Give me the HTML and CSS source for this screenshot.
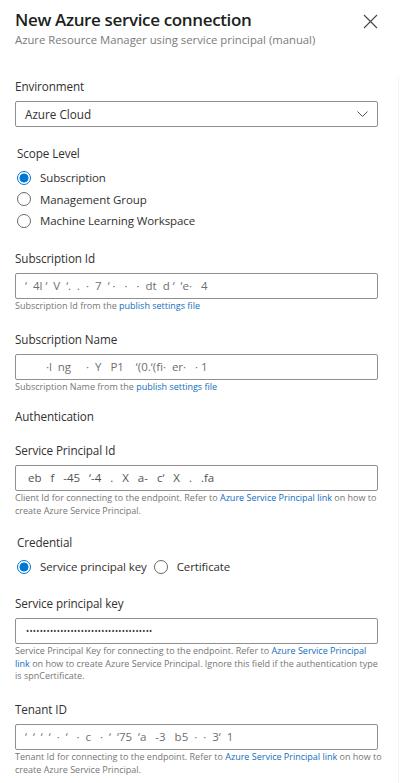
FILE: index.html
```html
<!DOCTYPE html>
<html lang="en">
<head>
<meta charset="utf-8">
<title>New Azure service connection</title>
<link rel="stylesheet" href="styles.css">
</head>
<body>
<div class="panel">
  <header class="header">
    <div class="titles">
      <h1 class="title">New Azure service connection</h1>
      <div class="subtitle">Azure Resource Manager using service principal (manual)</div>
    </div>
    <button class="close" aria-label="Close">
      <svg width="15" height="15" viewBox="0 0 15 15"><path d="M1 1L14 14M14 1L1 14" stroke="#444" stroke-width="1.1" fill="none"/></svg>
    </button>
  </header>

  <main class="content">
    <div class="field field-first">
      <div class="label">Environment</div>
      <div class="box select">
        <span>Azure Cloud</span>
        <svg width="11" height="6" viewBox="0 0 11 6"><path d="M0.5 0.5L5.5 5.5L10.5 0.5" stroke="#555" stroke-width="1" fill="none"/></svg>
      </div>
    </div>

    <div class="group scope">
      <div class="label indent">Scope Level</div>
      <div class="radios">
        <div class="radio-row"><span class="radio on"></span><span>Subscription</span></div>
        <div class="radio-row"><span class="radio"></span><span>Management Group</span></div>
        <div class="radio-row"><span class="radio"></span><span>Machine Learning Workspace</span></div>
      </div>
    </div>

    <div class="field">
      <div class="label">Subscription Id</div>
      <div class="box"><span class="masked">‘  4l ʼ  V  ʼ.  .  ·  7  ʼ ·   ·   ·  dt  d ʼ  ʼe·   4</span></div>
      <div class="help">Subscription Id from the <a href="#">publish settings file</a></div>
    </div>

    <div class="field">
      <div class="label">Subscription Name</div>
      <div class="box"><span class="masked">       ·l  ng     ·  Y   P1    ʼ(0.ʼ(fi·  er·   · 1</span></div>
      <div class="help">Subscription Name from the <a href="#">publish settings file</a></div>
    </div>

    <div class="section-title">Authentication</div>

    <div class="field field-auth">
      <div class="label">Service Principal Id</div>
      <div class="box"><span class="masked sp">eb   f   -45   ʼ-4   .   X   a-   cʼ   X   .   .fa</span></div>
      <div class="help">Client Id for connecting to the endpoint. Refer to <a href="#">Azure Service Principal link</a> on how to create Azure Service Principal.</div>
    </div>

    <div class="group credential">
      <div class="label indent">Credential</div>
      <div class="radio-inline">
        <span class="radio on"></span><span class="rtext">Service principal key</span>
        <span class="radio second"></span><span class="rtext">Certificate</span>
      </div>
    </div>

    <div class="field">
      <div class="label">Service principal key</div>
      <div class="box"><span class="dots">•••••••••••••••••••••••••••••••••••••</span></div>
      <div class="help help-narrow">Service Principal Key for connecting to the endpoint. Refer to <a href="#">Azure Service Principal link</a> on how to create Azure Service Principal. Ignore this field if the authentication type is spnCertificate.</div>
    </div>

    <div class="field">
      <div class="label">Tenant ID</div>
      <div class="box"><span class="masked">ʼ  ʼ  ʼ  ʼ  ·  ʼ   ·  c   ·  ʼ  ʼ75  ʼa   -3   b5  ·  ·  3ʼ  1</span></div>
      <div class="help">Tenant Id for connecting to the endpoint. Refer to <a href="#">Azure Service Principal link</a> on how to create Azure Service Principal.</div>
    </div>
  </main>
</div>
</body>
</html>
```

FILE: styles.css
```css
* { box-sizing: border-box; }

html, body {
  margin: 0;
  padding: 0;
  background: #ffffff;
}

body {
  font-family: "Open Sans", "Noto Sans", sans-serif;
  color: #323130;
  width: 400px;
  height: 783px;
  overflow: hidden;
}

.panel {
  width: 400px;
}

.header {
  display: flex;
  justify-content: space-between;
  align-items: flex-start;
  padding: 7px 22px 0 15px;
  height: 62px;
}

.title {
  margin: 0;
  font-size: 17px;
  font-weight: 600;
  line-height: 26px;
  color: #201f1e;
  letter-spacing: -0.35px;
}

.subtitle {
  font-size: 11.3px;
  line-height: 14px;
  margin-top: 0;
  color: #7a7a7a;
}

.close {
  border: none;
  background: transparent;
  padding: 0;
  margin-top: 7px;
  width: 15px;
  height: 15px;
  display: flex;
}

.content {
  padding: 0 20px 20px 15px;
  border-right: 1px solid #f3f3f3;
  margin-right: 1px;
}

.label {
  font-size: 11.7px;
  line-height: 18px;
  color: #323130;
  letter-spacing: -0.1px;
}

.label.indent {
  padding-left: 2px;
}

.field {
  margin-top: 17px;
  display: flex;
  flex-direction: column;
}

.field-first {
  margin-top: 15px;
}

.field .label {
  margin-bottom: 6px;
}

.box {
  height: 26px;
  border: 1px solid #8f8f8f;
  border-radius: 2px;
  padding: 0 9px;
  display: flex;
  align-items: center;
  font-size: 11.7px;
  color: #323130;
}

.select {
  justify-content: space-between;
  padding-right: 9px;
}

.masked {
  white-space: pre;
  color: #555;
  font-size: 11.5px;
  opacity: 0.85;
}

.masked.sp {
  padding-left: 3px;
  color: #333;
}

.dots {
  font-size: 8.3px;
  letter-spacing: 0.3px;
  color: #323130;
  padding-left: 1px;
}

.help {
  margin-top: 1.5px;
  margin-right: -18px;
  font-size: 9px;
  line-height: 12.5px;
  color: #767676;
}

.help-narrow {
  margin-right: 0;
  max-width: 368px;
}

.help a {
  color: #106ebe;
  text-decoration: none;
}

.group {
  margin-top: 17px;
}

.radios {
  margin-top: 5px;
  padding-left: 2px;
}

.radio-row {
  display: flex;
  align-items: center;
  gap: 9px;
  height: 21.5px;
  font-size: 11.5px;
  letter-spacing: -0.1px;
}

.radio {
  width: 14px;
  height: 14px;
  border-radius: 50%;
  border: 1px solid #6b6b6b;
  flex: 0 0 auto;
  background: #fff;
}

.radio.on {
  border: 1.5px solid #0078d4;
  background: radial-gradient(circle, #0078d4 0 4.2px, #ffffff 4.8px);
}

.section-title {
  margin-top: 13px;
  font-size: 11.7px;
  line-height: 18px;
  letter-spacing: -0.1px;
}

.field-auth {
  margin-top: 16px;
}

.credential {
  margin-top: 16px;
}

.radio-inline {
  margin-top: 5px;
  padding-left: 2px;
  display: flex;
  align-items: center;
  height: 21.5px;
  font-size: 11.5px;
  letter-spacing: -0.1px;
}

.radio-inline .rtext {
  margin-left: 9px;
}

.radio-inline .second {
  margin-left: 7px;
}

.credential + .field {
  margin-top: 16px;
}
```
